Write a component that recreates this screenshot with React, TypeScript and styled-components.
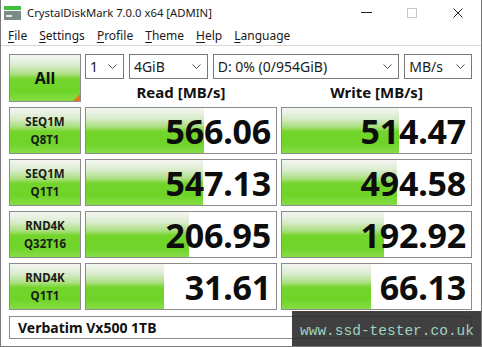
import React from 'react'
import styled, { createGlobalStyle } from 'styled-components'

const GREEN = `linear-gradient(to bottom,
  #f4f6f2 0%,
  #dbeccf 22%,
  #aadf7e 42%,
  #74d52c 52%,
  #6ed428 78%,
  #86dd46 100%)`

const GlobalStyle = createGlobalStyle`
  body {
    margin: 0;
    font-family: "Noto Sans", "Open Sans", sans-serif;
    background: #ffffff;
  }
`

const Window = styled.div`
  position: relative;
  width: 482px;
  height: 347px;
  box-sizing: border-box;
  background: #ffffff;
  border: 1px solid #7a7a7a;
  border-top: none;
  overflow: hidden;
`

const TitleBar = styled.div`
  display: flex;
  align-items: center;
  height: 25px;
  padding-left: 3px;
`

const Title = styled.span`
  margin-left: 6px;
  font-size: 11.3px;
  color: #1a1a1a;
`

const Controls = styled.div`
  display: flex;
  align-items: center;
  margin-left: auto;
  height: 100%;
`

const ControlButton = styled.div`
  display: flex;
  align-items: center;
  justify-content: center;
  width: 46px;
  height: 100%;
`

const MenuBar = styled.div`
  display: flex;
  align-items: center;
  gap: 12px;
  height: 20px;
  padding-left: 7px;
  border-bottom: 1px solid #d6d6d6;
  font-size: 12px;
  color: #1a1a1a;
`

const MenuItem = styled.span`
  u {
    text-decoration: underline;
    text-underline-offset: 2px;
  }
`

const Main = styled.div`
  display: flex;
  flex-direction: column;
  gap: 5px;
  padding: 8px 0 0 8px;
`

const Grid = styled.div`
  display: grid;
  grid-template-columns: 72px 192px 191px;
  column-gap: 4px;
`

const TopGrid = styled(Grid)`
  grid-template-rows: 25px 23px;
`

const RowsGrid = styled(Grid)`
  grid-auto-rows: 47px;
  row-gap: 5px;
`

const AllButton = styled.div`
  position: relative;
  grid-row: 1 / span 2;
  display: flex;
  align-items: center;
  justify-content: center;
  box-sizing: border-box;
  border: 1px solid #8c8c8c;
  background: ${GREEN};
  font-size: 16px;
  font-weight: 700;
  color: #111;

  &::after {
    content: '';
    position: absolute;
    right: 0;
    bottom: 0;
    border-style: solid;
    border-width: 0 0 7px 7px;
    border-color: transparent transparent #e8761e transparent;
  }
`

const Selectors = styled.div`
  grid-column: 2 / span 2;
  display: flex;
  gap: 5px;
`

const Select = styled.div<{ $width: number }>`
  display: flex;
  align-items: center;
  justify-content: space-between;
  box-sizing: border-box;
  width: ${({ $width }) => $width}px;
  height: 25px;
  padding: 0 6px 0 4px;
  border: 1px solid #7a7a7a;
  background: #fff;
  font-size: 14px;
  color: #1a1a1a;
`

const Header = styled.div`
  display: flex;
  align-items: center;
  justify-content: center;
  padding-top: 2px;
  font-size: 15px;
  font-weight: 700;
  color: #111;
`

const Label = styled.div`
  display: flex;
  flex-direction: column;
  align-items: center;
  justify-content: center;
  box-sizing: border-box;
  border: 1px solid #8c8c8c;
  background: ${GREEN};
  font-size: 11.5px;
  font-weight: 700;
  line-height: 18px;
  color: #1a1a1a;
`

const ValueBox = styled.div`
  position: relative;
  display: flex;
  align-items: center;
  justify-content: flex-end;
  box-sizing: border-box;
  padding-right: 5px;
  border: 1px solid #8c8c8c;
  background: #fff;
  overflow: hidden;
`

const Bar = styled.div`
  position: absolute;
  left: 0;
  top: 0;
  bottom: 0;
  background: ${GREEN};
`

const Value = styled.span`
  position: relative;
  font-size: 34px;
  font-weight: 700;
  letter-spacing: -0.2px;
  color: #0d0d0d;
`

const Comment = styled.div`
  display: flex;
  align-items: center;
  box-sizing: border-box;
  width: 463px;
  height: 23px;
  margin-top: 1px;
  padding-left: 8px;
  border: 1px solid #8c8c8c;
  font-size: 14px;
  font-weight: 700;
  color: #111;
`

const Watermark = styled.div`
  position: absolute;
  right: -1px;
  bottom: 0;
  display: flex;
  align-items: center;
  justify-content: center;
  width: 190px;
  height: 35px;
  padding-top: 4px;
  box-sizing: border-box;
  background: rgba(48, 48, 48, 0.92);
  font-family: "Liberation Mono", monospace;
  font-size: 14.5px;
  color: #9fd2c0;
`

const Chevron = () => (
  <svg width="9" height="5" viewBox="0 0 9 5">
    <polyline points="0.5,0.5 4.5,4.5 8.5,0.5" fill="none" stroke="#555" strokeWidth="1" />
  </svg>
)

const AppIcon = () => (
  <svg width="17" height="14" viewBox="0 0 17 14">
    <rect x="0" y="0" width="17" height="4" fill="#3fbf3f" />
    <rect x="0" y="5" width="17" height="9" fill="#7b8c86" />
    <rect x="2" y="9" width="6" height="2" fill="#e6ece9" />
  </svg>
)

const SELECTS = [
  { text: '1', width: 39 },
  { text: '4GiB', width: 79 },
  { text: 'D: 0% (0/954GiB)', width: 187 },
  { text: 'MB/s', width: 68 },
]

const RESULTS = [
  { name: ['SEQ1M', 'Q8T1'], read: '566.06', readBar: 62, write: '514.47', writeBar: 62 },
  { name: ['SEQ1M', 'Q1T1'], read: '547.13', readBar: 61.5, write: '494.58', writeBar: 61 },
  { name: ['RND4K', 'Q32T16'], read: '206.95', readBar: 54, write: '192.92', writeBar: 54 },
  { name: ['RND4K', 'Q1T1'], read: '31.61', readBar: 41, write: '66.13', writeBar: 47 },
]

const MENU = [
  ['F', 'ile'],
  ['S', 'ettings'],
  ['P', 'rofile'],
  ['T', 'heme'],
  ['H', 'elp'],
  ['L', 'anguage'],
]

export default function App() {
  return (
    <>
      <GlobalStyle />
      <Window>
        <TitleBar>
          <AppIcon />
          <Title>CrystalDiskMark 7.0.0 x64 [ADMIN]</Title>
          <Controls>
            <ControlButton>
              <svg width="11" height="1"><rect width="11" height="1" fill="#222" /></svg>
            </ControlButton>
            <ControlButton>
              <svg width="10" height="10"><rect x="0.5" y="0.5" width="9" height="9" fill="none" stroke="#c8c8c8" /></svg>
            </ControlButton>
            <ControlButton>
              <svg width="10" height="10">
                <path d="M0.5 0.5 L9.5 9.5 M9.5 0.5 L0.5 9.5" stroke="#222" strokeWidth="1" />
              </svg>
            </ControlButton>
          </Controls>
        </TitleBar>

        <MenuBar>
          {MENU.map(([first, rest]) => (
            <MenuItem key={first}><u>{first}</u>{rest}</MenuItem>
          ))}
        </MenuBar>

        <Main>
          <TopGrid>
            <AllButton>All</AllButton>
            <Selectors>
              {SELECTS.map(s => (
                <Select key={s.text} $width={s.width}>
                  <span>{s.text}</span>
                  <Chevron />
                </Select>
              ))}
            </Selectors>
            <Header>Read [MB/s]</Header>
            <Header>Write [MB/s]</Header>
          </TopGrid>

          <RowsGrid>
            {RESULTS.map(r => (
              <React.Fragment key={r.name.join()}>
                <Label>
                  <span>{r.name[0]}</span>
                  <span>{r.name[1]}</span>
                </Label>
                <ValueBox>
                  <Bar style={{ width: `${r.readBar}%` }} />
                  <Value>{r.read}</Value>
                </ValueBox>
                <ValueBox>
                  <Bar style={{ width: `${r.writeBar}%` }} />
                  <Value>{r.write}</Value>
                </ValueBox>
              </React.Fragment>
            ))}
          </RowsGrid>

          <Comment>Verbatim Vx500 1TB</Comment>
        </Main>

        <Watermark>www.ssd-tester.co.uk</Watermark>
      </Window>
    </>
  )
}
